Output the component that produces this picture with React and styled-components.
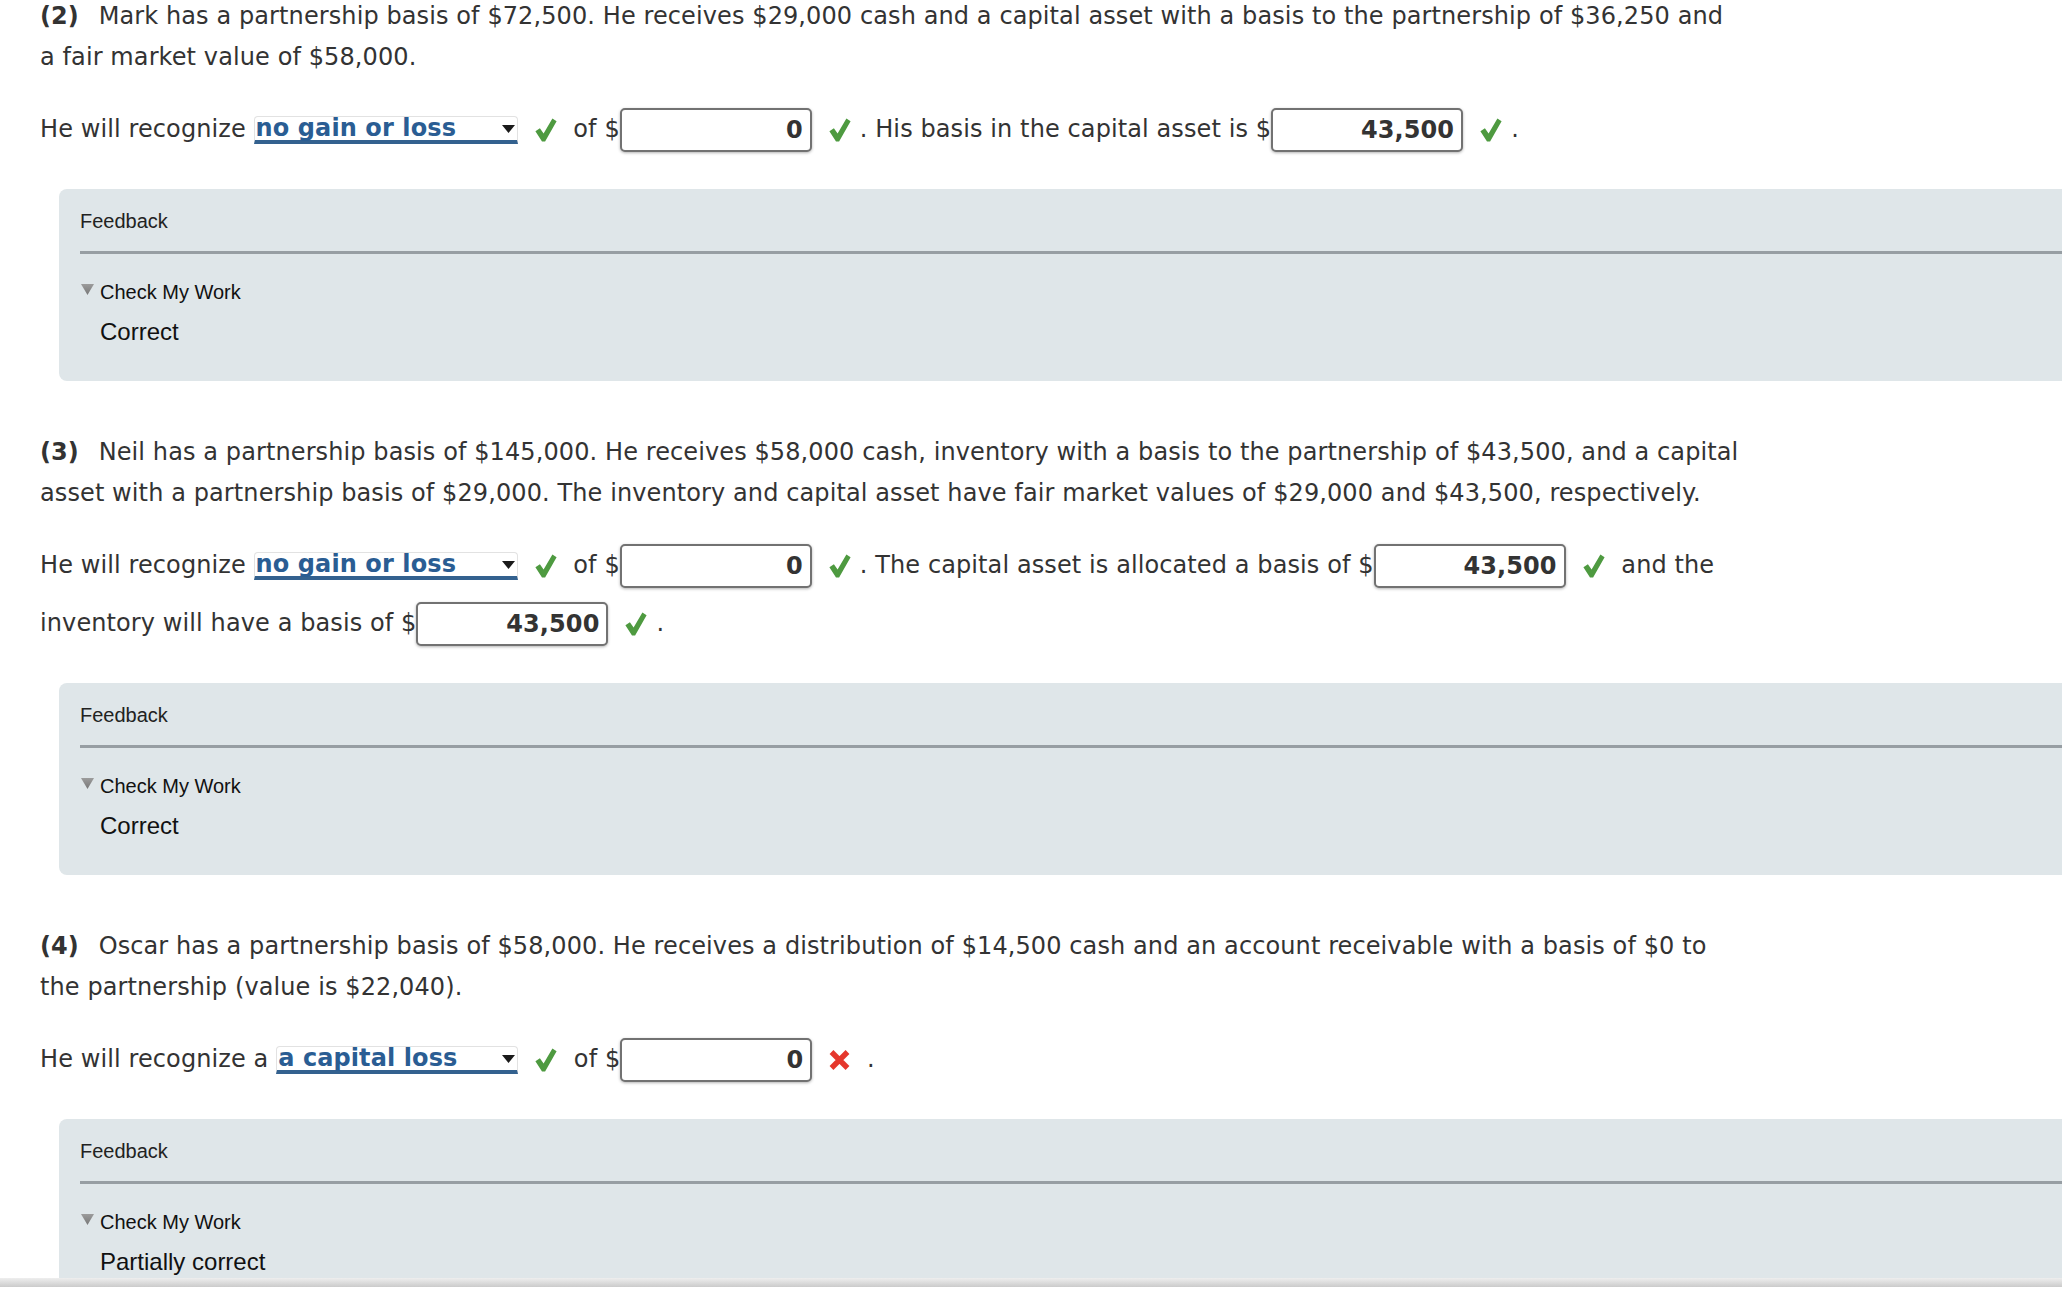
import React from "react";
import styled, { createGlobalStyle } from "styled-components";

const GlobalStyle = createGlobalStyle`
  html, body {
    margin: 0;
    padding: 0;
    background: #fff;
  }
  body {
    overflow: hidden;
  }
`;

// page frame: scrolled content + the bottom strip of the window
const Page = styled.div`
  width: 100%;
  height: 1296px;
  display: flex;
  flex-direction: column;
  overflow: hidden;
`;

const Viewport = styled.div`
  height: 1278px;
  flex: none;
  overflow: hidden;
  padding-left: 40px;
  font-family: "DejaVu Sans", Verdana, sans-serif;
  font-size: 24px;
  letter-spacing: 0.1px;
  color: #333;
`;

const BottomBar = styled.div`
  height: 9px;
  flex: none;
  background: linear-gradient(#eeeeee, #cbcbcb);
`;

const Question = styled.section`
  margin-top: ${(p) => (p.$first ? "-4px" : "51px")};
`;

const Prompt = styled.p`
  margin: 0;
  max-width: 1705px;
  line-height: 41px;
`;

const Num = styled.b`
  margin-right: 12px;
`;

const Answer = styled.div`
  margin-top: 22px;
  max-width: 1705px;
  line-height: 58px;
`;

const Choice = styled.span`
  display: inline-flex;
  align-items: center;
  justify-content: space-between;
  box-sizing: border-box;
  width: ${(p) => p.$width}px;
  height: 28px;
  padding: 0 2px 0 1px;
  vertical-align: middle;
  background: #fff;
  border: 1px solid #e2e2e2;
  border-bottom: 4px solid #33618f;
  border-radius: 4px 4px 0 0;
  color: #2a5d93;
  font-weight: bold;
  line-height: 23px;
`;

const Field = styled.span`
  display: inline-flex;
  align-items: center;
  justify-content: flex-end;
  box-sizing: border-box;
  width: 192px;
  height: 44px;
  padding-right: 7px;
  vertical-align: middle;
  background: #fff;
  border: 2px solid #727272;
  border-radius: 5px;
  box-shadow: 0 1px 3px rgba(0, 0, 0, 0.3);
  font-weight: bold;
  line-height: 24px;
`;

const MarkIcon = styled.svg`
  display: inline-block;
  vertical-align: middle;
  margin: 0 9px 0 17px;
`;

const Feedback = styled.div`
  margin: 31px -80px 0 19px;
  padding: 20px 0 35px 21px;
  background: #dfe6e9;
  border-radius: 8px 0 0 8px;
  font-family: "Liberation Sans", Arial, sans-serif;
  letter-spacing: 0;
`;

const FeedbackTitle = styled.div`
  font-size: 20px;
  line-height: 24px;
  color: #222;
`;

const Rule = styled.div`
  height: 3px;
  margin-top: 18px;
  background: #979ea3;
`;

const Summary = styled.div`
  display: flex;
  align-items: center;
  gap: 6px;
  margin-top: 26px;
  font-size: 20px;
  line-height: 24px;
  color: #111;
`;

const Disclosure = styled.svg`
  display: block;
  margin: 0 0 5px 1px;
`;

const Result = styled.div`
  margin-top: 14px;
  padding-left: 20px;
  font-size: 24px;
  line-height: 28px;
  color: #111;
`;

const Arrow = () => (
  <svg width="13" height="8" viewBox="0 0 13 8">
    <polygon points="0,0 13,0 6.5,8" fill="#1a1a1a" />
  </svg>
);

const Select = ({ value, width }) => (
  <Choice $width={width}>
    <span>{value}</span>
    <Arrow />
  </Choice>
);

const Mark = ({ ok = true }) =>
  ok ? (
    <MarkIcon width="22" height="24" viewBox="0 0 22 24">
      <path
        d="M0.4 13.2 L4.9 10.2 L8.6 15.4 L17.4 0.6 L21.6 3.2 L10.1 23.4 L7 23.4 Z"
        fill="#4e9a40"
      />
    </MarkIcon>
  ) : (
    <MarkIcon width="21" height="20" viewBox="0 0 21 20">
      <path d="M2.5 2 L18.5 18 M18.5 2 L2.5 18" stroke="#e5372c" strokeWidth="5.4" />
    </MarkIcon>
  );

const FeedbackBox = ({ result }) => (
  <Feedback>
    <FeedbackTitle>Feedback</FeedbackTitle>
    <Rule />
    <Summary>
      <Disclosure width="13" height="11" viewBox="0 0 13 11">
        <defs>
          <linearGradient id="tri" x1="0" y1="0" x2="0" y2="1">
            <stop offset="0" stopColor="#9c9c9c" />
            <stop offset="1" stopColor="#777" />
          </linearGradient>
        </defs>
        <polygon points="0,0 13,0 6.5,11" fill="url(#tri)" />
      </Disclosure>
      Check My Work
    </Summary>
    <Result>{result}</Result>
  </Feedback>
);

export default function App() {
  return (
    <Page>
      <GlobalStyle />
      <Viewport>
        <Question $first>
          <Prompt>
            <Num>(2)</Num> Mark has a partnership basis of $72,500. He receives $29,000 cash and a
            capital asset with a basis to the partnership of $36,250 and a fair market value of
            $58,000.
          </Prompt>
          <Answer>
            He will recognize <Select value="no gain or loss" width={264} />
            <Mark /> of $<Field>0</Field>
            <Mark />. His basis in the capital asset is $<Field>43,500</Field>
            <Mark />.
          </Answer>
          <FeedbackBox result="Correct" />
        </Question>

        <Question>
          <Prompt>
            <Num>(3)</Num> Neil has a partnership basis of $145,000. He receives $58,000 cash,
            inventory with a basis to the partnership of $43,500, and a capital asset with a
            partnership basis of $29,000. The inventory and capital asset have fair market values of
            $29,000 and $43,500, respectively.
          </Prompt>
          <Answer>
            He will recognize <Select value="no gain or loss" width={264} />
            <Mark /> of $<Field>0</Field>
            <Mark />. The capital asset is allocated a basis of $<Field>43,500</Field>
            <Mark /> and the inventory will have a basis of $<Field>43,500</Field>
            <Mark />.
          </Answer>
          <FeedbackBox result="Correct" />
        </Question>

        <Question>
          <Prompt>
            <Num>(4)</Num> Oscar has a partnership basis of $58,000. He receives a distribution of
            $14,500 cash and an account receivable with a basis of $0 to the partnership (value is
            $22,040).
          </Prompt>
          <Answer>
            He will recognize a <Select value="a capital loss" width={242} />
            <Mark /> of $<Field>0</Field>
            <Mark ok={false} /> .
          </Answer>
          <FeedbackBox result="Partially correct" />
        </Question>
      </Viewport>
      <BottomBar />
    </Page>
  );
}
